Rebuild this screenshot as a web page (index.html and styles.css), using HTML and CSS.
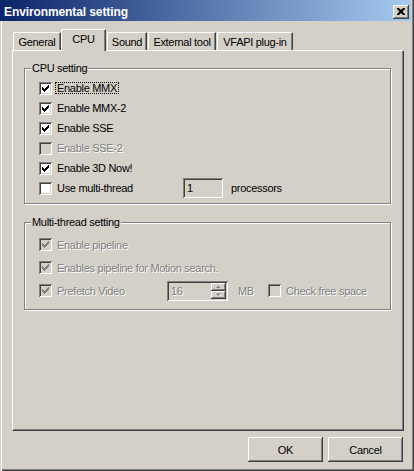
FILE: index.html
```html
<!DOCTYPE html>
<html>
<head>
<meta charset="utf-8">
<title>Environmental setting</title>
<link rel="stylesheet" href="styles.css">
</head>
<body>
<div class="window">
  <div class="titlebar">
    <span class="title">Environmental setting</span>
    <span class="close"><svg width="8" height="7" viewBox="0 0 8 7"><path d="M0 0h2l2 2 2-2h2v1L5.5 3.5 8 6v1H6L4 5 2 7H0V6l2.5-2.5L0 1z" fill="#000"/></svg></span>
  </div>
  <div class="body">
    <div class="tabs">
      <div class="tab t-general">General</div>
      <div class="tab t-cpu selected">CPU</div>
      <div class="tab t-sound">Sound</div>
      <div class="tab t-ext">External tool</div>
      <div class="tab t-vfapi">VFAPI plug-in</div>
    </div>
    <div class="pane">
      <div class="group g-cpu">
        <span class="legend">CPU setting</span>
        <div class="rows">
          <div class="row"><span class="cb"><svg width="13" height="13" viewBox="0 0 13 13"><path class="tick" d="M3 5h1v3H3zM4 6h1v3H4zM5 7h1v3H5zM6 6h1v3H6zM7 5h1v3H7zM8 4h1v3H8zM9 3h1v3H9z"/></svg></span><span class="lbl focus">Enable MMX</span></div>
          <div class="row"><span class="cb"><svg width="13" height="13" viewBox="0 0 13 13"><path class="tick" d="M3 5h1v3H3zM4 6h1v3H4zM5 7h1v3H5zM6 6h1v3H6zM7 5h1v3H7zM8 4h1v3H8zM9 3h1v3H9z"/></svg></span><span class="lbl">Enable MMX-2</span></div>
          <div class="row"><span class="cb"><svg width="13" height="13" viewBox="0 0 13 13"><path class="tick" d="M3 5h1v3H3zM4 6h1v3H4zM5 7h1v3H5zM6 6h1v3H6zM7 5h1v3H7zM8 4h1v3H8zM9 3h1v3H9z"/></svg></span><span class="lbl">Enable SSE</span></div>
          <div class="row"><span class="cb dis"></span><span class="lbl dis-text">Enable SSE-2</span></div>
          <div class="row"><span class="cb"><svg width="13" height="13" viewBox="0 0 13 13"><path class="tick" d="M3 5h1v3H3zM4 6h1v3H4zM5 7h1v3H5zM6 6h1v3H6zM7 5h1v3H7zM8 4h1v3H8zM9 3h1v3H9z"/></svg></span><span class="lbl">Enable 3D Now!</span></div>
          <div class="row">
            <div class="check w144"><span class="cb"></span><span class="lbl">Use multi-thread</span></div>
            <div class="edit e-proc">1</div>
            <span class="unit-proc">processors</span>
          </div>
        </div>
      </div>
      <div class="group g-mt">
        <span class="legend">Multi-thread setting</span>
        <div class="rows">
          <div class="row"><span class="cb dis"><svg width="13" height="13" viewBox="0 0 13 13"><path class="tick" d="M3 5h1v3H3zM4 6h1v3H4zM5 7h1v3H5zM6 6h1v3H6zM7 5h1v3H7zM8 4h1v3H8zM9 3h1v3H9z"/></svg></span><span class="lbl dis-text">Enable pipeline</span></div>
          <div class="row"><span class="cb dis"><svg width="13" height="13" viewBox="0 0 13 13"><path class="tick" d="M3 5h1v3H3zM4 6h1v3H4zM5 7h1v3H5zM6 6h1v3H6zM7 5h1v3H7zM8 4h1v3H8zM9 3h1v3H9z"/></svg></span><span class="lbl dis-text">Enables pipeline for Motion search.</span></div>
          <div class="row">
            <div class="check w128"><span class="cb dis"><svg width="13" height="13" viewBox="0 0 13 13"><path class="tick" d="M3 5h1v3H3zM4 6h1v3H4zM5 7h1v3H5zM6 6h1v3H6zM7 5h1v3H7zM8 4h1v3H8zM9 3h1v3H9z"/></svg></span><span class="lbl dis-text">Prefetch Video</span></div>
            <div class="edit e-spin">
              <span class="edit-val dis-text">16</span>
              <span class="spin">
                <span class="sb"><svg width="5" height="4" viewBox="0 0 5 4"><path d="M1 3h5L3.5 0.5z" fill="#fff"/><path d="M0 3h5L2.5 0.5z" fill="#808080"/></svg></span>
                <span class="sb"><svg width="5" height="4" viewBox="0 0 5 4"><path d="M1 1h5L3.5 3.5z" fill="#fff"/><path d="M0 0.5h5L2.5 3z" fill="#808080"/></svg></span>
              </span>
            </div>
            <span class="unit-mb dis-text">MB</span>
            <div class="check"><span class="cb dis"></span><span class="lbl dis-text">Check free space</span></div>
          </div>
        </div>
      </div>
    </div>
    <div class="buttons">
      <div class="btn">OK</div>
      <div class="btn">Cancel</div>
    </div>
  </div>
</div>
</body>
</html>
```
FILE: styles.css
```css
html, body {
  margin: 0;
  padding: 0;
  background: #d4d0c8;
}
body {
  width: 414px;
  height: 471px;
  font-family: "Liberation Sans", Arial, sans-serif;
  font-size: 11px;
  letter-spacing: -0.3px;
  color: #000;
}
.window {
  width: 414px;
  height: 471px;
  box-sizing: border-box;
  padding-right: 3px;
  background: #d4d0c8;
  box-shadow: inset 1px 0 #d4d0c8, inset 2px 0 #fff, inset -1px -1px #404040, inset -2px -2px #808080;
  display: flex;
  flex-direction: column;
}
.titlebar {
  height: 21px;
  box-sizing: border-box;
  padding: 2px 2px 0 4px;
  display: flex;
  align-items: center;
  background: linear-gradient(to right, #0a246a, #a6caf0);
}
.title {
  flex: 1;
  color: #fff;
  font-weight: bold;
  font-size: 12px;
  letter-spacing: -0.1px;
}
.close {
  width: 16px;
  height: 14px;
  box-sizing: border-box;
  background: #d4d0c8;
  box-shadow: inset -1px -1px #404040, inset 1px 1px #fff, inset -2px -2px #808080;
  display: flex;
  align-items: center;
  justify-content: center;
  padding-right: 1px;
}
.close svg { display: block; }
.body {
  flex: 1;
  display: flex;
  flex-direction: column;
  padding: 8px 7px 0 12px;
}
.tabs {
  display: flex;
  align-items: flex-end;
  height: 21px;
  padding-left: 1px;
}
.tab {
  height: 18px;
  box-sizing: border-box;
  border-top: 1px solid #fff;
  border-left: 1px solid #fff;
  border-right: 1px solid #404040;
  box-shadow: inset -1px 0 #808080;
  display: flex;
  align-items: center;
  justify-content: center;
  white-space: nowrap;
  background: #d4d0c8;
}
.tab.selected {
  height: 22px;
  margin-bottom: -1px;
  padding-bottom: 4px;
  position: relative;
  z-index: 1;
}
.t-general { width: 48px; }
.t-cpu { width: 45px; }
.t-sound { width: 40px; margin-left: 1px; }
.t-ext { width: 68px; margin-left: 1px; }
.t-vfapi { width: 76px; margin-left: 1px; }
.pane {
  height: 381px;
  box-sizing: border-box;
  border: 1px solid;
  border-color: #fff #404040 #404040 #fff;
  box-shadow: inset -1px -1px #808080;
  padding: 17px 0 0 11px;
}
.group {
  width: 367px;
  box-sizing: border-box;
  border: 1px solid #808080;
  box-shadow: inset 1px 1px #fff, 1px 1px #fff;
  display: flex;
  flex-direction: column;
  align-items: flex-start;
  padding-left: 14px;
}
.g-cpu { height: 136px; }
.g-mt { height: 88px; margin-top: 18px; }
.legend {
  margin-top: -7px;
  margin-left: -8px;
  padding: 0 1px;
  background: #d4d0c8;
  line-height: 13px;
  white-space: nowrap;
}
.rows {
  margin-top: 3px;
  display: flex;
  flex-direction: column;
}
.g-mt .rows { margin-top: 4px; }
.row {
  height: 20px;
  display: flex;
  align-items: center;
}
.g-mt .row { height: 23px; }
.check {
  display: flex;
  align-items: center;
}
.w144 { width: 144px; }
.w128 { width: 128px; }
.cb {
  width: 13px;
  height: 13px;
  flex: none;
  background: #fff;
  box-shadow: inset 1px 1px #808080, inset -1px -1px #fff, inset 2px 2px #404040, inset -2px -2px #d4d0c8;
}
.cb svg { display: block; }
.tick { fill: #000; }
.cb.dis { background: #d4d0c8; }
.cb.dis .tick { fill: #808080; }
.lbl {
  margin-left: 3px;
  padding: 0 1px;
  border: 1px dotted transparent;
  line-height: 10px;
  white-space: nowrap;
}
.lbl.focus { border-color: #000; }
.dis-text {
  color: #808080;
  text-shadow: 1px 1px #fff;
}
.edit {
  height: 20px;
  box-sizing: border-box;
  background: #d4d0c8;
  box-shadow: inset 1px 1px #808080, inset -1px -1px #fff, inset 2px 2px #404040, inset -2px -2px #d4d0c8;
}
.e-proc {
  width: 40px;
  padding: 3px 4px;
  line-height: 14px;
}
.unit-proc { margin-left: 8px; }
.e-spin {
  width: 61px;
  padding: 2px;
  display: flex;
}
.edit-val {
  flex: 1;
  padding: 1px 2px;
  line-height: 14px;
}
.spin {
  width: 15px;
  display: flex;
  flex-direction: column;
}
.sb {
  flex: 1;
  display: flex;
  align-items: center;
  justify-content: center;
  background: #d4d0c8;
  box-shadow: inset -1px -1px #404040, inset 1px 1px #fff, inset -2px -2px #808080;
}
.sb svg { display: block; }
.unit-mb {
  width: 30px;
  margin-left: 10px;
}
.buttons {
  display: flex;
  justify-content: flex-end;
  gap: 5px;
  margin-top: 6px;
  padding-right: 1px;
}
.btn {
  width: 75px;
  height: 25px;
  box-sizing: border-box;
  display: flex;
  align-items: center;
  justify-content: center;
  box-shadow: inset -1px -1px #404040, inset 1px 1px #fff, inset -2px -2px #808080;
}
```
